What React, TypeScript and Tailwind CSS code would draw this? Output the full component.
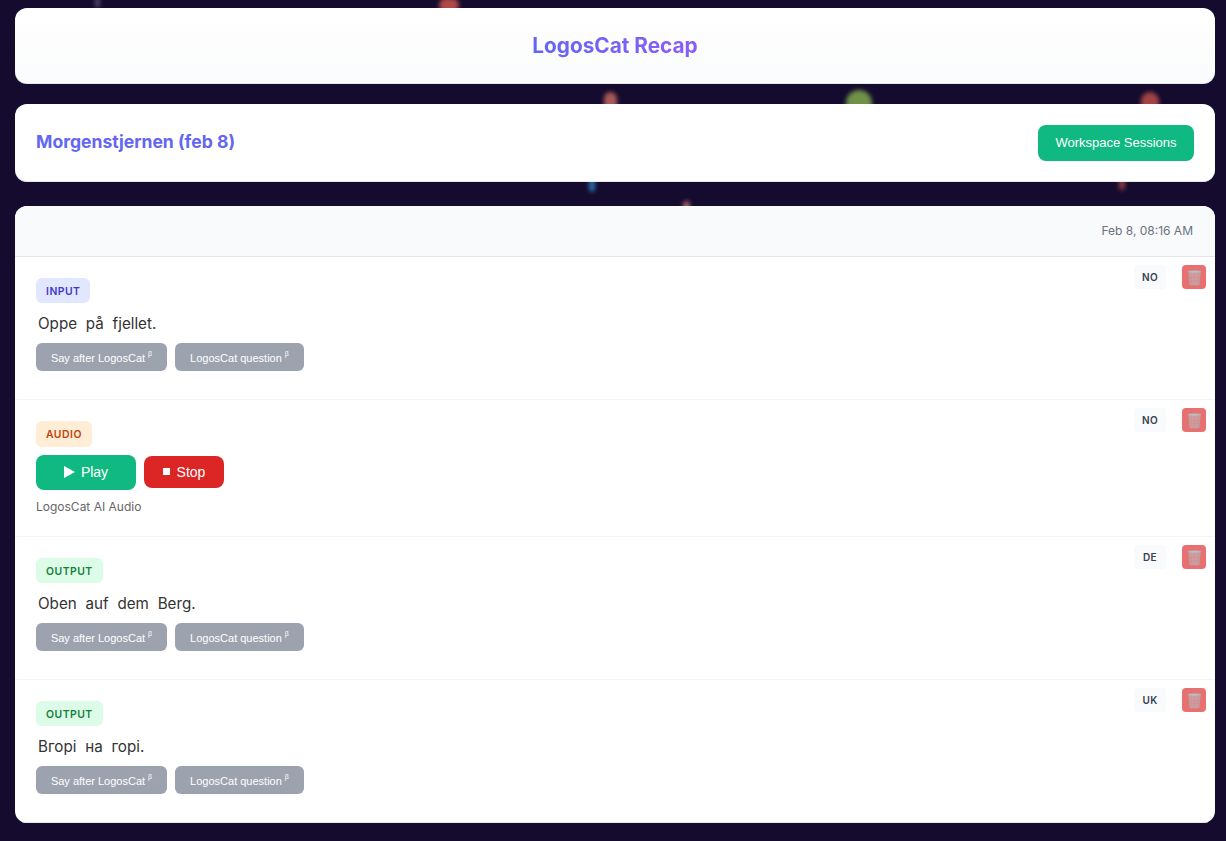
const BETA = "\u03B2";

function Blob({ className }: { className: string }) {
  return <div className={`absolute rounded-full blur-[2px] ${className}`} />;
}

function TrashIcon() {
  return (
    <svg width="15" height="17" viewBox="0 0 14 16" aria-hidden="true">
      <path d="M1.6 3.4 L12.4 3.4 L11.2 15 L2.8 15 Z" fill="#d49a9c" stroke="#b0a4a8" strokeWidth="0.8" />
      <ellipse cx="7" cy="2.6" rx="6.3" ry="1.3" fill="#c9b8ba" stroke="#a8a4a8" strokeWidth="0.6" />
      <path d="M3.5 5 L4.3 14 M7 5 L7 14 M10.5 5 L9.7 14 M2.4 8 L11.6 8 M2.7 11 L11.3 11" stroke="#c49294" strokeWidth="0.5" fill="none" />
    </svg>
  );
}

function RowActions({ lang }: { lang: string }) {
  return (
    <div className="absolute top-2 right-[9px] flex items-center gap-4">
      <span className="flex h-6 w-8 items-center justify-center rounded bg-[#f9fafb] text-[10px] font-semibold tracking-[0.4px] text-[#374151]">
        {lang}
      </span>
      <button className="flex h-6 w-6 items-center justify-center rounded bg-[#e87070]">
        <TrashIcon />
      </button>
    </div>
  );
}

function Tag({ label, className }: { label: string; className: string }) {
  return (
    <span className={`flex w-fit items-center rounded-md px-[10px] pt-[2px] text-[10.4px] font-semibold tracking-[0.5px] ${className}`}>
      {label}
    </span>
  );
}

function BetaButton({ label, className }: { label: string; className: string }) {
  return (
    <button className={`flex h-7 items-center justify-center rounded-md bg-[#9ca3af] pt-[2px] font-['Liberation_Sans',sans-serif] text-[11px] text-white ${className}`}>
      {label}
      <sup className="ml-[3px] -translate-y-[1px] text-[7px] leading-none">{BETA}</sup>
    </button>
  );
}

function TextRow({ tag, tagClass, text, lang }: { tag: string; tagClass: string; text: string; lang: string }) {
  return (
    <div className="relative h-[143px] border-b border-[#f3f4f6] px-[21px] pt-[21px] last:border-b-[#e5e7eb]">
      <RowActions lang={lang} />
      <Tag label={tag} className={`h-[25px] ${tagClass}`} />
      <p className="mt-[7px] pl-[2px] text-[15.2px] leading-[28px] text-[#333] [word-spacing:4.5px]">{text}</p>
      <div className="mt-[5px] flex gap-2">
        <BetaButton label="Say after LogosCat" className="w-[131px]" />
        <BetaButton label="LogosCat question" className="w-[129px]" />
      </div>
    </div>
  );
}

function AudioRow() {
  return (
    <div className="relative h-[137px] border-b border-[#f3f4f6] px-[21px] pt-[21px]">
      <RowActions lang="NO" />
      <Tag label="AUDIO" className="h-[26px] bg-[#ffedd5] text-[#c2410c]" />
      <div className="mt-[8px] flex items-start gap-2 font-['Liberation_Sans',sans-serif] text-sm text-white">
        <button className="flex h-[35px] w-[100px] items-center justify-center gap-[6px] rounded-lg bg-[#10b981] pb-px">
          <svg width="11" height="12" viewBox="0 0 11 12" aria-hidden="true">
            <path d="M0 0 L11 6 L0 12 Z" fill="#fff" />
          </svg>
          Play
        </button>
        <button className="mt-px flex h-8 w-20 items-center justify-center gap-[7px] rounded-lg bg-[#dc2626] pb-px">
          <span className="h-[7px] w-[7px] bg-white" />
          Stop
        </button>
      </div>
      <p className="mt-[9px] text-xs leading-[16px] text-[#666]">LogosCat AI Audio</p>
    </div>
  );
}

export default function App() {
  return (
    <div className="relative h-[841px] overflow-hidden bg-[#150b2e] font-['Inter',sans-serif]">
      <Blob className="left-[95px] top-[-4px] h-[12px] w-[5px] bg-[#4b4468]" />
      <Blob className="left-[439px] top-[-2px] h-[14px] w-[20px] bg-[#b04a48]" />
      <Blob className="left-[604px] top-[92px] h-[22px] w-[13px] bg-[#a85a58]" />
      <Blob className="left-[846px] top-[90px] h-[30px] w-[26px] bg-[#6f9148]" />
      <Blob className="left-[1141px] top-[92px] h-[24px] w-[18px] bg-[#a34444]" />
      <Blob className="left-[589px] top-[174px] h-[18px] w-[6px] bg-[#2a6ba6]" />
      <Blob className="left-[683px] top-[201px] h-[12px] w-[7px] bg-[#a0606a]" />
      <Blob className="left-[1119px] top-[176px] h-[14px] w-[6px] bg-[#8c3a44]" />

      <div className="relative flex flex-col pl-[15px] pr-[11px] pt-2">
        <header className="flex h-[76px] items-center justify-center rounded-xl border-b border-[#e5e7eb] bg-gradient-to-b from-white to-[#fafbfc]">
          <h1 className="bg-gradient-to-r from-[#6366f1] to-[#8b5cf6] bg-clip-text text-[20.8px] font-bold text-transparent">LogosCat Recap</h1>
        </header>

        <section className="mt-5 flex h-[78px] items-center justify-between rounded-xl border-b border-[#e5e7eb] bg-white px-[21px]">
          <h2 className="text-[17.6px] font-bold text-[#6366f1]">Morgenstjernen (feb 8)</h2>
          <button className="flex h-9 w-[156px] items-center justify-center rounded-lg bg-[#10b981] font-['Liberation_Sans',sans-serif] text-[13px] text-white">
            Workspace Sessions
          </button>
        </section>

        <main className="mt-6 overflow-hidden rounded-xl bg-white">
          <div className="flex h-[51px] items-center justify-end border-b border-[#e5e7eb] bg-[#f9fafb] pr-[22px] text-xs text-[#6b7280]">
            Feb 8, 08:16 AM
          </div>
          <TextRow tag="INPUT" tagClass="bg-[#e0e7ff] text-[#4338ca]" text="Oppe på fjellet." lang="NO" />
          <AudioRow />
          <TextRow tag="OUTPUT" tagClass="bg-[#dcfce7] text-[#15803d]" text="Oben auf dem Berg." lang="DE" />
          <TextRow tag="OUTPUT" tagClass="bg-[#dcfce7] text-[#15803d]" text="Вгорі на горі." lang="UK" />
        </main>
      </div>
    </div>
  );
}
